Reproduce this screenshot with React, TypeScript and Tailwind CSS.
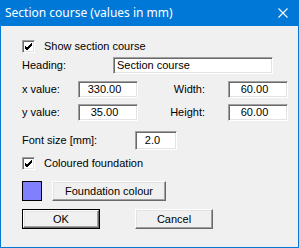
import React from "react";

const sunken =
  "bg-white border border-t-[#a0a0a0] border-l-[#a0a0a0] border-b-white border-r-white shadow-[inset_1px_1px_0_#696969,inset_-1px_-1px_0_#e3e3e3]";
const raised =
  "bg-[#f0f0f0] border border-t-white border-l-white border-b-[#696969] border-r-[#696969] shadow-[inset_-1px_-1px_0_#a0a0a0,inset_1px_1px_0_#e3e3e3]";

function Check() {
  return (
    <div className={`w-[13px] h-[13px] ${sunken} flex items-center justify-center`}>
      <svg width="9" height="9" viewBox="0 0 9 9">
        <path d="M1 4 L3 6 L8 1 M1 5 L3 7 L8 2 M1 6 L3 8 L8 3" stroke="#000" strokeWidth="1" fill="none" shapeRendering="crispEdges" />
      </svg>
    </div>
  );
}

function Field({ value, className }: { value: string; className: string }) {
  return (
    <div className={`${sunken} ${className} flex items-center justify-center pr-[7px]`}>
      {value}
    </div>
  );
}

export default function App() {
  return (
    <div
      className="w-[299px] h-[248px] bg-[#f0f0f0] border-l border-r border-b border-[#0078d7] text-black text-[11px] leading-none"
      style={{ fontFamily: '"Liberation Sans", Arial, sans-serif' }}
    >
      <div className="h-[26px] -mx-px bg-[#0078d7] flex items-center justify-between pl-[5px] pr-[11px] text-white">
        <span className="text-[12px]" style={{ fontFamily: '"Noto Sans", sans-serif' }}>
          Section course (values in mm)
        </span>
        <svg width="10" height="10" viewBox="0 0 10 10">
          <path d="M0.5 0.5 L9.5 9.5 M9.5 0.5 L0.5 9.5" stroke="#fff" strokeWidth="1.1" />
        </svg>
      </div>
      <div className="pl-[21px] pt-[14px] flex flex-col">
        <div className="flex items-center h-[13px]">
          <Check />
          <span className="ml-[9px]">Show section course</span>
        </div>
        <div className="flex items-center mt-[4px] h-[17px]">
          <span className="w-[91px]">Heading:</span>
          <div className={`${sunken} w-[160px] h-[17px] flex items-center pl-[3px]`}>Section course</div>
        </div>
        <div className="flex items-center mt-[7px] h-[17px]">
          <span className="w-[56px]">x value:</span>
          <Field value="330.00" className="w-[60px] h-[17px]" />
          <span className="w-[67px] text-right">Width:</span>
          <Field value="60.00" className="w-[60px] h-[17px] ml-[23px]" />
        </div>
        <div className="flex items-center mt-[6px] h-[17px]">
          <span className="w-[56px]">y value:</span>
          <Field value="35.00" className="w-[60px] h-[17px]" />
          <span className="w-[67px] text-right">Height:</span>
          <Field value="60.00" className="w-[60px] h-[17px] ml-[23px]" />
        </div>
        <div className="flex items-center mt-[10px] h-[19px]">
          <span className="w-[113px]">Font size [mm]:</span>
          <Field value="2.0" className="w-[42px] h-[19px]" />
        </div>
        <div className="flex items-center mt-[7px] h-[13px]">
          <Check />
          <span className="ml-[9px]">Coloured foundation</span>
        </div>
        <div className="flex items-center mt-[11px] h-[20px]">
          <div className="w-[20px] h-[20px] bg-[#8080ff] border border-black" />
          <div className={`${raised} ml-[10px] w-[114px] h-[20px] flex items-center justify-center`}>
            Foundation colour
          </div>
        </div>
        <div className="flex items-center mt-[8px] h-[20px]">
          <div className="w-[78px] h-[20px] border border-black">
            <div className={`${raised} w-full h-full flex items-center justify-center`}>OK</div>
          </div>
          <div className={`${raised} ml-[35px] w-[78px] h-[20px] flex items-center justify-center`}>
            Cancel
          </div>
        </div>
      </div>
    </div>
  );
}
